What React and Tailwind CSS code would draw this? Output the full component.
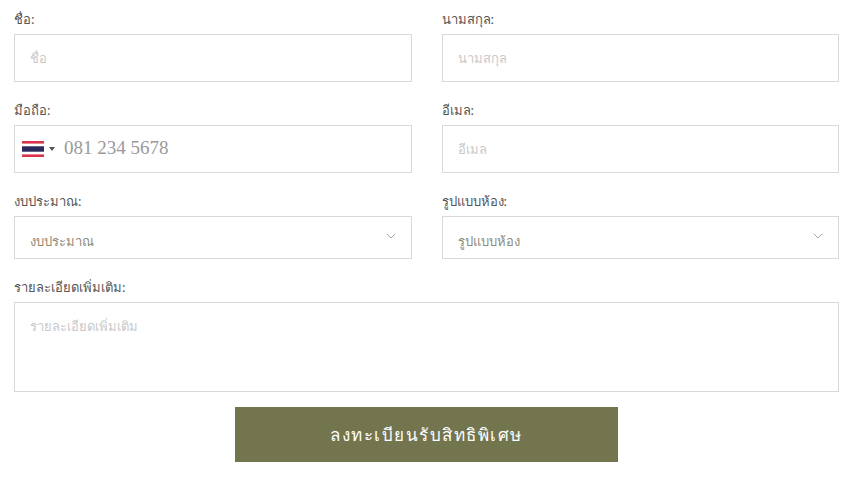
import { ChevronDown } from "lucide-react";

const font = "font-['Noto_Sans','Noto_Sans_CJK_SC','DejaVu_Sans',sans-serif]";
const inputClass =
  "block w-full h-[48px] border border-[#d9d9d9] bg-white px-[15px] text-[13px] text-[#555] outline-none placeholder:text-[#c9c9c9]";

function Label({ children }) {
  return (
    <label className="block h-[20px] mb-[5px] text-[13px] leading-[20px] text-[#555]">
      {children}
    </label>
  );
}

function TextField({ label, placeholder }) {
  return (
    <div>
      <Label>{label}:</Label>
      <input type="text" placeholder={placeholder} className={inputClass} />
    </div>
  );
}

function SelectField({ label, placeholder }) {
  return (
    <div>
      <Label>{label}:</Label>
      <div className="relative">
        <select className="block w-full h-[43px] appearance-none border border-[#d9d9d9] bg-white pl-[15px] pt-[9px] text-[13px] text-[#8f8a78] outline-none">
          <option>{placeholder}</option>
        </select>
        <ChevronDown
          size={16}
          strokeWidth={1}
          className="absolute right-[13px] top-[12px] text-[#777] pointer-events-none"
        />
      </div>
    </div>
  );
}

function ThaiFlag() {
  return (
    <svg width="22" height="16" viewBox="0 0 22 16" className="shrink-0">
      <rect width="22" height="16" fill="#d8344a" />
      <rect y="2.6" width="22" height="10.8" fill="#ffffff" />
      <rect y="5.3" width="22" height="5.4" fill="#2a2a5c" />
    </svg>
  );
}

export default function App() {
  return (
    <div className={`w-[855px] h-[478px] bg-white pl-[14px] pr-[16px] pt-[9px] ${font}`}>
      <form className="flex flex-col">
        <div className="grid grid-cols-2 gap-x-[30px] gap-y-[18px]">
          <TextField label="ชื่อ" placeholder="ชื่อ" />
          <TextField label="นามสกุล" placeholder="นามสกุล" />

          <div>
            <Label>มือถือ:</Label>
            <div className="flex items-center h-[48px] border border-[#d9d9d9] bg-white pl-[7px]">
              <ThaiFlag />
              <span className="ml-[5px] w-0 h-0 border-x-[3px] border-x-transparent border-t-[4px] border-t-[#555]" />
              <input
                type="tel"
                placeholder="081 234 5678"
                className="ml-[9px] flex-1 min-w-0 -mt-[2px] font-['Liberation_Serif',serif] text-[19px] text-[#555] outline-none placeholder:text-[#9a9a9a]"
              />
            </div>
          </div>
          <TextField label="อีเมล" placeholder="อีเมล" />

          <SelectField label="งบประมาณ" placeholder="งบประมาณ" />
          <SelectField label="รูปแบบห้อง" placeholder="รูปแบบห้อง" />

          <div className="col-span-2">
            <Label>รายละเอียดเพิ่มเติม:</Label>
            <textarea
              placeholder="รายละเอียดเพิ่มเติม"
              className="block w-full h-[90px] resize-none border border-[#d9d9d9] bg-white px-[15px] py-[14px] text-[13px] text-[#555] outline-none placeholder:text-[#c9c9c9]"
            />
          </div>
        </div>

        <button
          type="button"
          className="self-center mt-[15px] w-[383px] h-[55px] bg-[#73754f] text-[17px] tracking-[1.5px] text-white"
        >
          ลงทะเบียนรับสิทธิพิเศษ
        </button>
      </form>
    </div>
  );
}
